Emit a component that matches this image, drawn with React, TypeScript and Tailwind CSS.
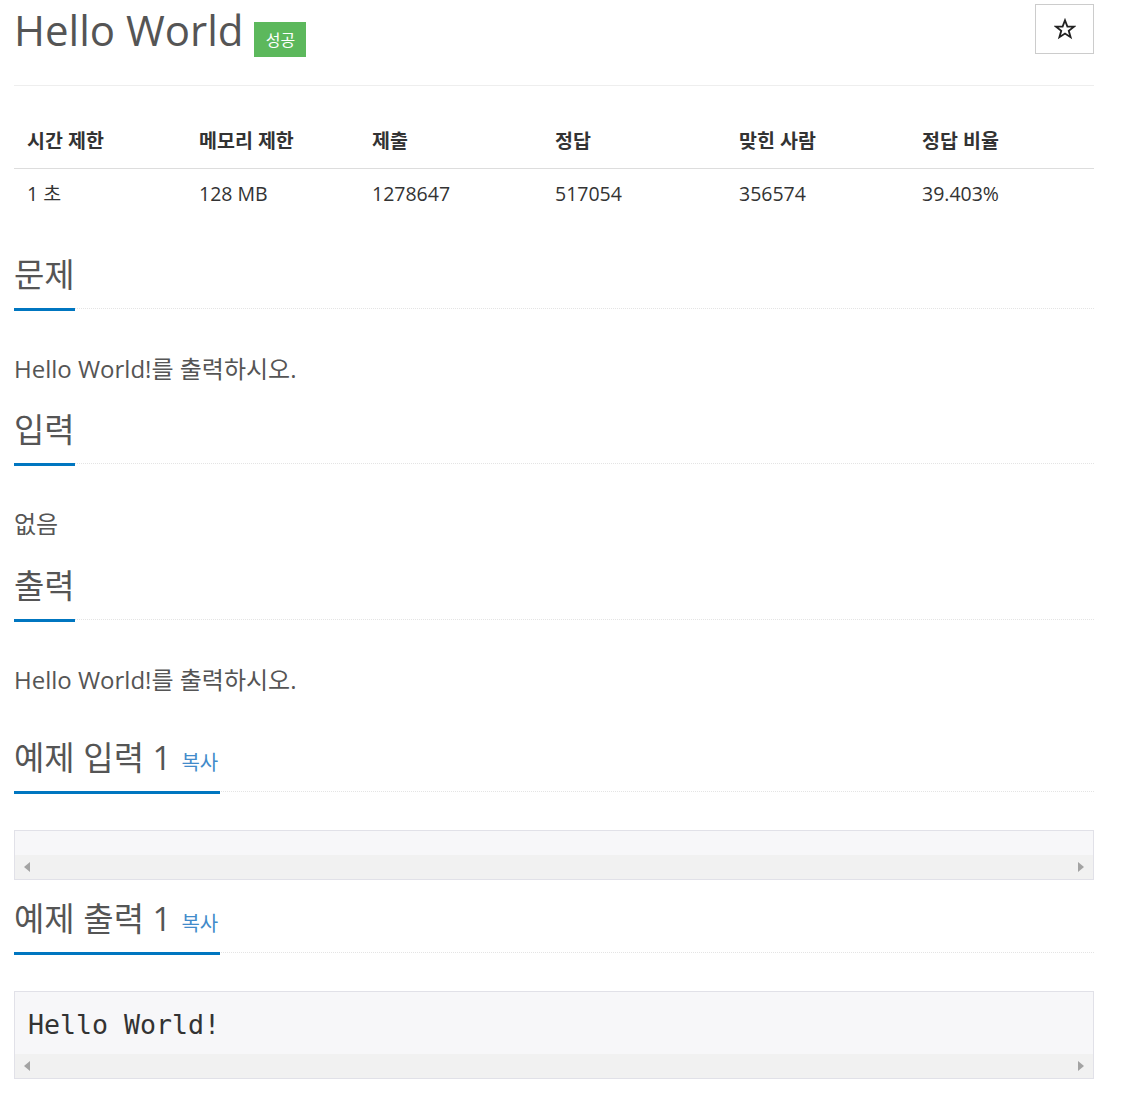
import React from "react";

const font = "font-['Open_Sans','Noto_Sans_CJK_KR',sans-serif]";

function Headline({ children, mt }: { children: React.ReactNode; mt: string }) {
  return (
    <div className={`${mt} border-b border-dotted border-[#e4e4e4]`}>
      <h2 className="inline-block -mb-[3px] h-[56px] border-b-[3px] border-[#0076c0] pb-[13px] text-[33px] leading-[40px] text-[#555] font-normal">
        {children}
      </h2>
    </div>
  );
}

function ScrollBar() {
  return (
    <div className="flex h-[24px] items-center justify-between bg-[#f1f1f1] px-[9px]">
      <span className="h-0 w-0 border-y-[5px] border-r-[6px] border-y-transparent border-r-[#a3a3a3]" />
      <span className="h-0 w-0 border-y-[5px] border-l-[6px] border-y-transparent border-l-[#a3a3a3]" />
    </div>
  );
}

function Pre({ text }: { text: string }) {
  return (
    <div className="border border-[#e1e1e8] bg-[#f7f7f9]">
      <pre className="px-[13px] pt-[14px] pb-[10px] font-['DejaVu_Sans_Mono',monospace] text-[26.6px] leading-[38px] text-[#333]">
        {text}
      </pre>
      <ScrollBar />
    </div>
  );
}

function Copy() {
  return <span className="ml-[10px] mr-[2px] text-[20px] leading-none text-[#428bca]">복사</span>;
}

const heads = ["시간 제한", "메모리 제한", "제출", "정답", "맞힌 사람", "정답 비율"];
const vals = ["1 초", "128 MB", "1278647", "517054", "356574", "39.403%"];

export default function App() {
  return (
    <div className={`${font} ml-[14px] w-[1080px] bg-white pb-[20px]`}>
      <div className="flex h-[86px] items-start justify-between border-b border-[#eee]">
        <div className="flex items-start pt-[5px]">
          <h1 className="text-[42px] leading-[50px] font-normal text-[#555]">Hello World</h1>
          <span className="ml-[11px] mt-[17px] flex h-[35px] w-[52px] items-center justify-center bg-[#5cb85c] text-[16px] text-white">
            성공
          </span>
        </div>
        <button className="mt-[4px] flex h-[50px] w-[59px] items-center justify-center border border-[#ccc] bg-white">
          <svg width="22" height="22" viewBox="0 0 24 24">
            <polygon
              points="12,2.5 14.6,9.3 21.8,9.5 16.1,14 18.1,21 12,17 5.9,21 7.9,14 2.2,9.5 9.4,9.3"
              fill="none"
              stroke="#222"
              strokeWidth="2"
            />
          </svg>
        </button>
      </div>

      <div className="mt-[28px]">
        <div className="grid h-[55px] grid-cols-[172px_173px_183px_184px_183px_185px] items-center border-b border-[#ddd] text-[19.5px] font-bold text-[#333]">
          {heads.map((h) => (
            <div key={h} className="px-[13px]">{h}</div>
          ))}
        </div>
        <div className="grid h-[50px] grid-cols-[172px_173px_183px_184px_183px_185px] items-center text-[19.5px] text-[#333]">
          {vals.map((v) => (
            <div key={v} className="px-[13px]">{v}</div>
          ))}
        </div>
      </div>

      <Headline mt="mt-[36px]">문제</Headline>
      <p className="mt-[43px] text-[24px] leading-[34px] text-[#555]">Hello World!를 출력하시오.</p>

      <Headline mt="mt-[24px]">입력</Headline>
      <p className="mt-[43px] text-[24px] leading-[34px] text-[#555]">없음</p>

      <Headline mt="mt-[25px]">출력</Headline>
      <p className="mt-[43px] text-[24px] leading-[34px] text-[#555]">Hello World!를 출력하시오.</p>

      <Headline mt="mt-[41px]">
        예제 입력 1<Copy />
      </Headline>
      <div className="mt-[38px]">
        <Pre text="" />
      </div>

      <Headline mt="mt-[19px]">
        예제 출력 1<Copy />
      </Headline>
      <div className="mt-[38px]">
        <Pre text="Hello World!" />
      </div>
    </div>
  );
}
